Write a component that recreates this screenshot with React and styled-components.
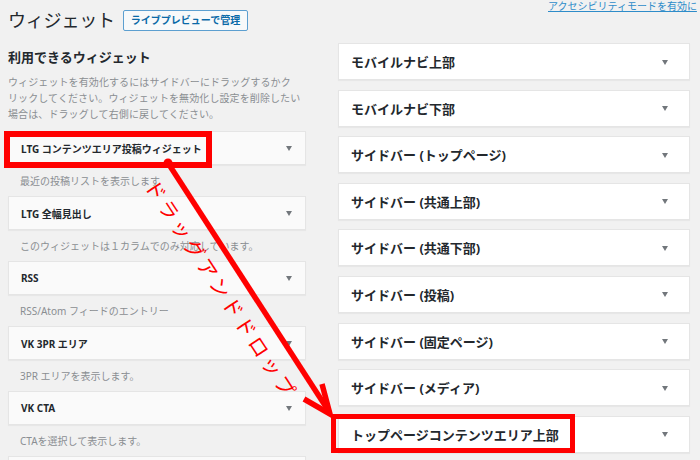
import React from 'react'
import styled, { createGlobalStyle } from 'styled-components'

const GlobalStyle = createGlobalStyle`
    html, body {
        margin: 0;
        padding: 0;
        overflow: hidden;
        background: #f1f1f1;
    }
    body {
        font-family: "Noto Sans", "Noto Sans CJK JP", sans-serif;
        color: #23282d;
    }
`

const availableWidgets = [
    { title: 'LTG コンテンツエリア投稿ウィジェット', desc: '最近の投稿リストを表示します', marked: true },
    { title: 'LTG 全幅見出し', desc: 'このウィジェットは１カラムでのみ対応しています。' },
    { title: 'RSS', desc: 'RSS/Atom フィードのエントリー' },
    { title: 'VK 3PR エリア', desc: '3PR エリアを表示します。' },
    { title: 'VK CTA', desc: 'CTAを選択して表示します。' },
    { title: '', desc: '' },
]

const sidebars = [
    { title: 'モバイルナビ上部' },
    { title: 'モバイルナビ下部' },
    { title: 'サイドバー (トップページ)' },
    { title: 'サイドバー (共通上部)' },
    { title: 'サイドバー (共通下部)' },
    { title: 'サイドバー (投稿)' },
    { title: 'サイドバー (固定ページ)' },
    { title: 'サイドバー (メディア)' },
    { title: 'トップページコンテンツエリア上部', marked: true },
]

const App = () => {
    return (
        <>
        <GlobalStyle />
        <Page>
            <TopRow>
                <TitleGroup>
                    <PageTitle>ウィジェット</PageTitle>
                    <ActionButton>ライブプレビューで管理</ActionButton>
                </TitleGroup>
                <A11yLink href="#">アクセシビリティモードを有効に</A11yLink>
            </TopRow>

            <Columns>
                <LeftCol>
                    <SectionHeading>利用できるウィジェット</SectionHeading>
                    <SectionDesc>
                        ウィジェットを有効化するにはサイドバーにドラッグするかク<br />
                        リックしてください。ウィジェットを無効化し設定を削除したい<br />
                        場合は、ドラッグして右側に戻してください。
                    </SectionDesc>
                    <WidgetList>
                        {availableWidgets.map((w, i) => (
                            <li key={i}>
                                <AvailableWidget>
                                    <WidgetTitle>{w.title}</WidgetTitle>
                                    <Toggle />
                                    {w.marked && <Marker $left={-5} $top={-1} $w={208} $h={37} $t={6} />}
                                </AvailableWidget>
                                <WidgetDesc>{w.desc}</WidgetDesc>
                            </li>
                        ))}
                    </WidgetList>
                </LeftCol>

                <RightCol>
                    {sidebars.map(s => (
                        <SidebarBox key={s.title}>
                            <SidebarTitle>{s.title}</SidebarTitle>
                            <Toggle $right />
                            {s.marked && <Marker $left={-8} $top={-3} $w={244} $h={39} $t={5} />}
                        </SidebarBox>
                    ))}
                </RightCol>
            </Columns>

            <ArrowLayer width="700" height="460" viewBox="0 0 700 460">
                <circle cx="168" cy="163" r="4.5" fill="#ff0000" />
                <line x1="168" y1="163" x2="328" y2="410" stroke="#ff0000" strokeWidth="5.5" />
                <polyline points="304,399 330,414 322,384" fill="none" stroke="#ff0000" strokeWidth="5.5" strokeLinejoin="miter" />
            </ArrowLayer>
            <DragLabel>ドラッグアンドドロップ</DragLabel>
        </Page>
        </>
    )
}

const Page = styled.div`
    position: relative;
    width: 700px;
    height: 460px;
    overflow: hidden;
    box-sizing: border-box;
    padding: 0 10px 0 8px;
`

const TopRow = styled.div`
    display: grid;
    grid-template-columns: 540px auto;
    height: 43px;
`

const TitleGroup = styled.div`
    display: flex;
    align-items: center;
    gap: 8px;
    height: 30px;
    padding-top: 5px;
`

const PageTitle = styled.h1`
    margin: 0;
    font-size: 18px;
    font-weight: 400;
    line-height: 24px;
    color: #23282d;
    letter-spacing: -0.2px;
`

const ActionButton = styled.span`
    display: inline-block;
    box-sizing: border-box;
    height: 21px;
    padding: 0 7px;
    border: 1px solid #5c9fd0;
    border-radius: 2px;
    background: #f7f9fa;
    color: #0a6aa8;
    font-size: 10px;
    font-weight: 700;
    line-height: 19px;
    white-space: nowrap;
`

const A11yLink = styled.a`
    align-self: start;
    font-size: 10px;
    line-height: 12px;
    color: #2e8cc9;
    text-decoration: underline;
    white-space: nowrap;
`

const Columns = styled.div`
    display: grid;
    grid-template-columns: 298px 352px;
    column-gap: 32px;
    align-items: start;
`

const LeftCol = styled.div`
    display: flex;
    flex-direction: column;
`

const SectionHeading = styled.h2`
    margin: 5px 0 0;
    font-size: 13px;
    font-weight: 700;
    line-height: 18px;
    color: #23282d;
`

const SectionDesc = styled.p`
    margin: 8px 0 0;
    font-size: 10px;
    line-height: 16px;
    color: #8a8e92;
    letter-spacing: 0.1px;
`

const WidgetList = styled.ul`
    list-style: none;
    margin: 9px 0 0;
    padding: 0;
`

const AvailableWidget = styled.div`
    position: relative;
    display: flex;
    align-items: center;
    justify-content: space-between;
    box-sizing: border-box;
    height: 34px;
    padding: 0 13px 0 12px;
    background: #fafafa;
    border: 1px solid #e5e5e5;
    box-shadow: 0 1px 1px rgba(0, 0, 0, 0.04);
`

const WidgetTitle = styled.span`
    font-size: 10px;
    font-weight: 700;
    color: #23282d;
`

const WidgetDesc = styled.div`
    height: 31px;
    padding: 0 12px;
    font-size: 10px;
    line-height: 33px;
    color: #8a8e92;
`

const RightCol = styled.div`
    display: flex;
    flex-direction: column;
    gap: 9.6px;
`

const SidebarBox = styled.div`
    position: relative;
    display: flex;
    align-items: center;
    justify-content: space-between;
    box-sizing: border-box;
    height: 37px;
    padding: 0 21px 0 12px;
    background: #fff;
    border: 1px solid #e5e5e5;
    box-shadow: 0 1px 1px rgba(0, 0, 0, 0.04);
`

const SidebarTitle = styled.span`
    font-size: 13px;
    font-weight: 700;
    color: #23282d;
`

const Toggle = styled.span`
    width: 0;
    height: 0;
    border-left: 3.5px solid transparent;
    border-right: 3.5px solid transparent;
    border-top: 5px solid #72777c;
    margin-top: ${p => (p.$right ? '1px' : '0')};
`

const Marker = styled.span`
    position: absolute;
    left: ${p => p.$left}px;
    top: ${p => p.$top}px;
    width: ${p => p.$w}px;
    height: ${p => p.$h}px;
    box-sizing: border-box;
    border: ${p => p.$t}px solid #ff0000;
    pointer-events: none;
`

const ArrowLayer = styled.svg`
    position: absolute;
    left: 0;
    top: 0;
    pointer-events: none;
`

const DragLabel = styled.div`
    position: absolute;
    left: 222px;
    top: 289px;
    transform: translate(-50%, -50%) rotate(56.6deg);
    font-size: 20px;
    font-weight: 400;
    letter-spacing: 3.5px;
    color: #ff0000;
    white-space: nowrap;
    pointer-events: none;
`

export default App
